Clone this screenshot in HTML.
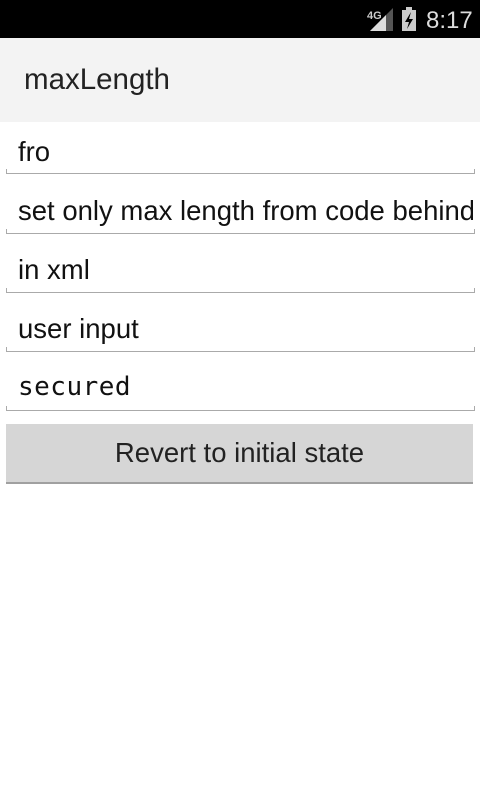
<!DOCTYPE html>
<html><head><style>
body{margin:0;width:480px;height:800px;background:#fff;font-family:"Liberation Sans",sans-serif;position:relative;overflow:hidden}
.sb{position:absolute;top:0;left:0;width:480px;height:38px;background:#000}
.hd{position:absolute;top:38px;left:0;width:480px;height:84px;background:#f3f3f3}
.hd span{position:absolute;left:24px;top:25px;font-size:29.5px;color:#222}
.f{position:absolute;left:6px;width:467px;height:4px;border:1px solid #aaa;border-top:none}
.t{position:absolute;left:18px;font-size:27.5px;color:#111;white-space:nowrap;width:455px;overflow:hidden}
.btn{position:absolute;left:6px;top:424px;width:467px;height:58px;background:#d6d6d6;border-bottom:2px solid #a0a0a0;font-size:27.5px;color:#222;text-align:center;line-height:58px}
</style></head><body>
<div class="sb">
<svg width="480" height="38" style="position:absolute;left:0;top:0">
<text x="367" y="19" font-size="11" font-weight="bold" fill="#ccc" font-family="Liberation Sans">4G</text>
<polygon points="370,31 393,8 393,31" fill="#555"/>
<polygon points="370,31 386,15 386,31" fill="#ddd"/>
<rect x="402" y="10" width="14" height="21" fill="#ccc"/><rect x="406" y="7" width="6" height="3" fill="#ccc"/>
<polygon points="411,12 405,22 409,22 407,29 413,19 409,19" fill="#000"/>
<text x="426" y="28" font-size="24" fill="#ddd" font-family="Liberation Sans">8:17</text>
</svg></div>
<div class="hd"><span>maxLength</span></div>
<div class="t" style="top:136px">fro</div><div class="f" style="top:169px"></div>
<div class="t" style="top:195px">set only max length from code behind</div><div class="f" style="top:229px"></div>
<div class="t" style="top:254px">in xml</div><div class="f" style="top:288px"></div>
<div class="t" style="top:313px">user input</div><div class="f" style="top:347px"></div>
<div class="t" style="top:372px;font-size:26px;font-family:'DejaVu Sans Mono',monospace;letter-spacing:0.5px">secured</div><div class="f" style="top:406px"></div>
<div class="btn">Revert to initial state</div>
</body></html>
